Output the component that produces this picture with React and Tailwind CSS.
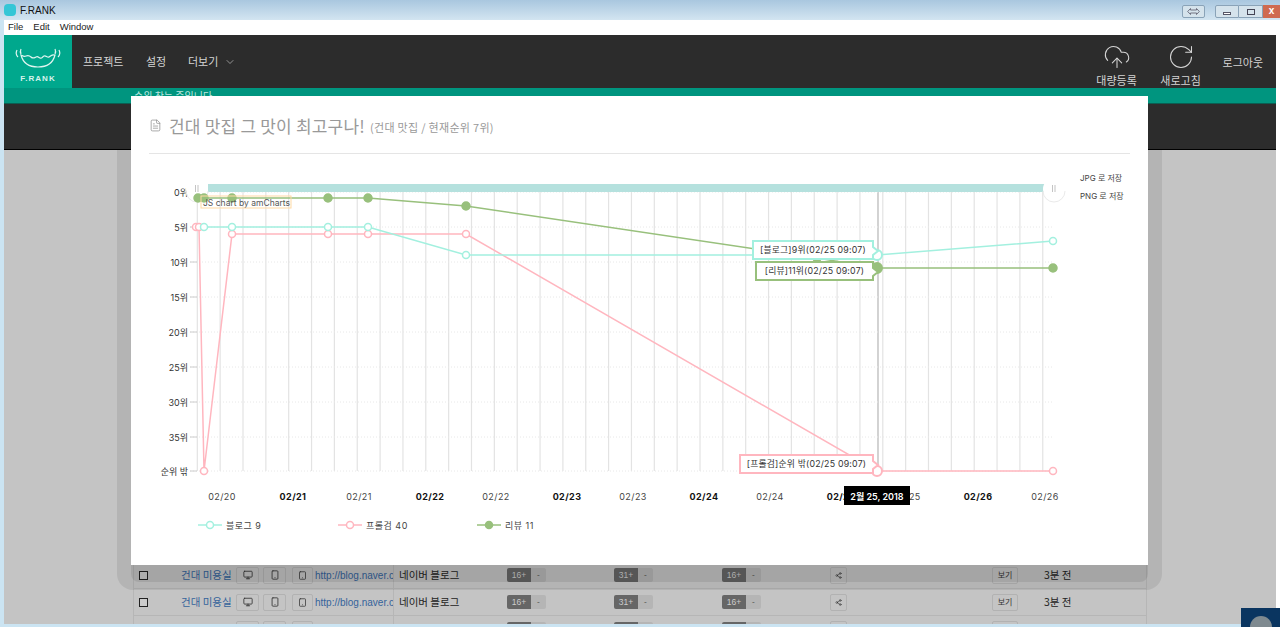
import { ChevronDown, CloudUpload, FileText, Monitor, RotateCw, Share2, Smartphone, Tablet } from "lucide-react";

const KR = "font-['Noto_Sans_CJK_KR','Noto_Sans',sans-serif]";
const CHART_FONT = "Inter, 'Noto Sans CJK KR', sans-serif";

// ===================== CHART DATA =====================
const CYAN = "#a3f0df";
const PINK = "#ffb6bf";
const GREEN = "#98c07c";

const gridX = Array.from({ length: 38 }, (_, i) => 197.3 + i * 22.85);
const yLabels = [
  ["0위", 192],
  ["5위", 227],
  ["10위", 262],
  ["15위", 297],
  ["20위", 332],
  ["25위", 367],
  ["30위", 402],
  ["35위", 437],
  ["순위 밖", 471],
];
const xLabels = [
  ["02/20", 222, false],
  ["02/21", 293, true],
  ["02/21", 359, false],
  ["02/22", 430, true],
  ["02/22", 496, false],
  ["02/23", 567, true],
  ["02/23", 633, false],
  ["02/24", 704, true],
  ["02/24", 770, false],
  ["02/25", 841, true],
  ["02/25", 907, false],
  ["02/26", 978, true],
  ["02/26", 1045, false],
];
const cyanPts = [[204, 227], [232, 227], [328, 227], [368, 227], [466, 255], [877, 255], [1053, 241]];
const pinkPts = [[196, 227], [199, 227], [204, 471], [232, 234], [328, 234], [368, 234], [466, 234], [877, 471], [1053, 471]];
const greenPts = [[198, 198], [204, 198], [232, 198], [328, 198], [368, 198], [466, 206], [817, 258], [877, 268], [1053, 268]];

const toLine = (pts) => pts.map((p) => p.join(",")).join(" ");

const Series = ({ pts, color, filled }) => (
  <g>
    <polyline points={toLine(pts)} fill="none" stroke={color} strokeWidth="1.5" />
    {pts.map(([x, y]) => {
      const big = x === 877;
      return (
        <circle
          key={x}
          cx={x}
          cy={y}
          r={big ? 5 : filled ? 4 : 3.5}
          fill={filled ? color : "#fff"}
          stroke={color}
          strokeWidth={big ? 2 : 1.5}
        />
      );
    })}
  </g>
);

const Balloon = ({ x, y, w, color, children }) => (
  <g>
    <path
      d={`M${x} ${y}h${w}v6l5 4l-5 4v4h-${w}z`}
      fill="#fff"
      stroke={color}
      strokeWidth="2"
    />
    <text x={x + w / 2} y={y + 12} textAnchor="middle" fontSize="8.8" letterSpacing=".2" fill="#333">
      {children}
    </text>
  </g>
);

const Legend = ({ x, color, filled, label }) => (
  <g>
    <line x1={x} x2={x + 24} y1="525" y2="525" stroke={color} strokeWidth="1.5" />
    <circle cx={x + 12} cy="525" r="3.5" fill={filled ? color : "#fff"} stroke={color} strokeWidth="1.5" />
    <text x={x + 28} y="529" fontSize="9" letterSpacing=".5" fill="#444">
      {label}
    </text>
  </g>
);

// drag handle of the chart scrollbar, only its lower rim shows
const Grip = ({ x }) => (
  <g>
    <circle cx={x} cy="189" r="11" fill="#fff" />
    <path d={`M${x - 11} 191a11 11 0 0 0 22 0`} fill="none" stroke="#eaeaea" />
    <line x1={x - 1.5} x2={x - 1.5} y1="185" y2="192" stroke="#aaa" strokeWidth=".7" />
    <line x1={x + 1} x2={x + 1} y1="185" y2="192" stroke="#aaa" strokeWidth=".7" />
  </g>
);

const Chart = () => (
  <svg viewBox="131 154 1017 411" className="block w-[1017px] h-[411px]" style={{ fontFamily: CHART_FONT }}>
    {gridX.map((x) => (
      <line key={x} x1={x} x2={x} y1="192" y2="471" stroke="#e3e3e3" strokeWidth="1.2" />
    ))}
    <line x1="878" x2="878" y1="192" y2="471" stroke="#b5b5b5" strokeWidth="1.2" />
    {yLabels.map(([label, y]) => (
      <g key={label}>
        <line x1="190" x2="1052" y1={y} y2={y} stroke="#e8e8e8" strokeDasharray="1 2" />
        <line x1="190" x2="197" y1={y} y2={y} stroke="#ccc" />
        <text x="188" y={y + 4} textAnchor="end" fontSize="9" fill="#333">
          {label}
        </text>
      </g>
    ))}
    {xLabels.map(([label, x, bold], i) => (
      <text
        key={i}
        x={x}
        y="500"
        textAnchor="middle"
        fontSize="9"
        letterSpacing=".4"
        fontWeight={bold ? 700 : 400}
        fill={bold ? "#111" : "#444"}
      >
        {label}
      </text>
    ))}

    {/* scrollbar */}
    <rect x="208" y="184" width="840" height="8" fill="#b5e1de" />
    <Grip x={197} />
    <Grip x={1054} />

    <Series pts={pinkPts} color={PINK} />
    <Series pts={cyanPts} color={CYAN} />
    <Series pts={greenPts} color={GREEN} filled />

    <rect x="201" y="196" width="90" height="12" fill="none" stroke="#ffd9a3" />
    <text x="203" y="205.5" fontSize="8.5" textLength="87" fill="#555">JS chart by amCharts</text>

    <text x="1080" y="181" fontSize="8" fill="#444">JPG 로 저장</text>
    <text x="1080" y="199" fontSize="8" fill="#444">PNG 로 저장</text>

    <Balloon x={753} y={241} w={120} color={CYAN}>[블로그]9위(02/25 09:07)</Balloon>
    <Balloon x={756} y={262} w={117} color={GREEN}>[리뷰]11위(02/25 09:07)</Balloon>
    <Balloon x={740} y={455} w={133} color={PINK}>[프롤검]순위 밖(02/25 09:07)</Balloon>

    <rect x="844" y="486" width="66" height="19" fill="#000" />
    <text x="877" y="500" textAnchor="middle" fontSize="9" fontWeight="600" fill="#fff">2월 25, 2018</text>

    <Legend x={198} color={CYAN} label="블로그 9" />
    <Legend x={338} color={PINK} label="프롤검 40" />
    <Legend x={477} color={GREEN} filled label="리뷰 11" />
  </svg>
);

// ===================== PAGE PARTS =====================
const TitleBar = () => (
  <div className="h-5 shrink-0 flex items-center justify-between pl-1 bg-gradient-to-b from-[#a9c7df] to-[#d3e5f1]">
    <div className="flex items-center gap-[4px]">
      <div className="w-[12px] h-[12px] rounded-[4px] bg-[#35c6d6]" />
      <span className="text-[10px] text-[#111] font-['Liberation_Sans',sans-serif]">F.RANK</span>
    </div>
    <div className="flex items-start self-start pt-[5px]">
      <div className="w-[23px] h-[13px] mr-[10px] border border-[#8aa3b8] rounded-[2px] bg-[#d5e3ec] flex items-center justify-center">
        <svg width="13" height="7" viewBox="0 0 13 7" fill="none" stroke="#667" strokeWidth=".9">
          <path d="M3.5.5L.7 3.5l2.8 3V5h6v1.5l2.8-3-2.8-3V2h-6z" />
        </svg>
      </div>
      <div className="w-6 h-[13px] border border-[#8aa3b8] rounded-l-[2px] bg-[#d5e3ec] flex items-end justify-center pb-[2px]">
        <div className="w-2 h-[3px] border border-[#556] bg-white" />
      </div>
      <div className="w-6 h-[13px] border border-l-0 border-[#8aa3b8] bg-[#d5e3ec] flex items-center justify-center">
        <div className="w-2 h-[6px] border border-[#445]" />
      </div>
      <div className="w-[17px] h-[13px] bg-[#cf6a50] text-white text-[10px] font-bold leading-[12px] text-center font-['Liberation_Sans',sans-serif]">x</div>
    </div>
  </div>
);

const MenuBar = () => (
  <div className="h-[15px] shrink-0 bg-white flex items-center gap-[10px] pl-[4px] text-[9.5px] text-[#222] font-['Liberation_Sans',sans-serif]">
    <span>File</span>
    <span>Edit</span>
    <span>Window</span>
  </div>
);

const Logo = () => (
  <div className="w-[68px] bg-[#00a88d] flex flex-col items-center pt-[11px]">
    <svg width="50" height="24" viewBox="0 0 50 24" fill="none" stroke="#dff5f0" strokeWidth="1.2">
      <path d="M8 9c2 8 8 12 17 12s15-4 17-12c-3-1-4 1-6 2-2 1-3-2-5-1s-2 3-4 2-2-2-4-1-3 2-5 0-3-2-5-1-3 0-5-1z" />
      <path d="M4 4c-1 2-1 5 1 7M8 3c-1 2-1 3 0 5M46 4c1 2 1 5-1 7M42 3c1 2 1 3 0 5" />
    </svg>
    <span className="text-[8px] mt-[3px] font-bold tracking-[1px] text-[#d5f2ec] font-['Liberation_Sans',sans-serif]">F.RANK</span>
  </div>
);

const Header = () => (
  <div className={`h-[53px] shrink-0 flex bg-[#2c2c2c] text-[#d5d5d5] text-[11px] ${KR}`}>
    <Logo />
    <div className="flex items-center pl-[11px]">
      <span className="w-[63px]">프로젝트</span>
      <span className="w-[42px]">설정</span>
      <span>더보기</span>
      <ChevronDown size={12} strokeWidth={1.2} className="ml-[6px]" />
    </div>
    <div className="ml-auto flex items-start pt-[8px] pr-[13px]">
      <div className="flex flex-col items-center w-[42px] mr-[22px]">
        <CloudUpload size={28} strokeWidth={0.9} />
        <span className="mt-[1px]">대량등록</span>
      </div>
      <div className="flex flex-col items-center w-[42px] mr-[21px]">
        <RotateCw size={28} strokeWidth={0.9} />
        <span className="mt-[1px]">새로고침</span>
      </div>
      <span className="mt-[11px]">로그아웃</span>
    </div>
  </div>
);

const IconBtn = ({ w, children }) => (
  <div className={`${w} h-[17px] shrink-0 border border-[#b2b2b2] rounded-[2px] flex items-center justify-center text-[#333]`}>
    {children}
  </div>
);

const Rank = ({ w, label }) => (
  <div className={`${w} flex`}>
    <div className="w-6 h-[14px] rounded-l-[2px] bg-[#666] text-[#ccc] text-[8.5px] leading-[14px] text-center font-['Liberation_Sans',sans-serif]">{label}</div>
    <div className="w-[15px] h-[14px] rounded-r-[2px] bg-[#b5b5b5] text-[#444] text-[8px] leading-[14px] text-center">-</div>
  </div>
);

const Row = () => (
  <div className={`h-[27px] shrink-0 flex items-center border-b border-[#b6b6b6] text-[10.5px] text-[#222] ${KR}`}>
    <div className="ml-[5px] w-[9px] h-[9px] border-[1.5px] border-[#222] bg-[#ccc] shrink-0" />
    <span className="ml-[33px] w-[55px] shrink-0 text-[#35639b] whitespace-nowrap">건대 미용실</span>
    <IconBtn w="w-[23px]"><Monitor size={10} /></IconBtn>
    <div className="w-1 shrink-0" />
    <IconBtn w="w-[23px]"><Smartphone size={10} /></IconBtn>
    <div className="w-[6px] shrink-0" />
    <IconBtn w="w-[21px]"><Tablet size={9} /></IconBtn>
    <span className="ml-[2px] w-[78px] shrink-0 overflow-hidden whitespace-nowrap text-[10px] text-[#35639b] font-['Liberation_Sans',sans-serif]">http://blog.naver.com</span>
    <span className="pl-[5px] w-[114px] shrink-0 h-full flex items-center border-l border-[#b6b6b6]">네이버 블로그</span>
    <Rank w="w-[107px] shrink-0" label="16+" />
    <Rank w="w-[108px] shrink-0" label="31+" />
    <Rank w="w-[108px] shrink-0" label="16+" />
    <IconBtn w="w-[17px]"><Share2 size={7} /></IconBtn>
    <div className="w-[145px] shrink-0" />
    <IconBtn w="w-[26px]"><span className="text-[8px]">보기</span></IconBtn>
    <span className="ml-[26px]">3분 전</span>
  </div>
);

const Modal = () => (
  <div className="absolute left-[131px] top-[96px] w-[1017px] h-[469px] bg-white">
    <div className={`mx-[18px] h-[58px] flex items-center gap-[7px] border-b border-[#e5e5e5] pt-[2px] ${KR}`}>
      <FileText size={13} strokeWidth={1.3} className="text-[#888]" />
      <span className="text-[17px] text-[#999] tracking-[.2px]">건대 맛집 그 맛이 최고구나!</span>
      <span className="text-[11px] text-[#999] mt-[3px] -ml-[2px] tracking-[.3px]">(건대 맛집 / 현재순위 7위)</span>
    </div>
    <Chart />
  </div>
);

const App = () => {
  return (
    <div className="relative w-[1280px] h-[627px] overflow-hidden flex flex-col">
      <TitleBar />
      <div className="flex-1 min-h-0 flex flex-col pl-1 border-r-4 border-white bg-[#cbe4f2]">
        <MenuBar />
        <Header />
        <div className={`h-[16px] shrink-0 bg-[#00957f] border-b border-[#0b5e52] pl-[130px] text-[10px] leading-[16px] text-[#bfe6df] ${KR}`}>
          순위 찾는 중입니다
        </div>
        <div className="h-[46px] shrink-0 bg-[#2c2c2c] border-b border-black" />
        <div className="relative flex-1 min-h-0 mb-[3px] overflow-hidden bg-[#c4c4c4] pl-[129px] pr-[129px]">
          <div className="h-full border-x border-[#b6b6b6] pt-[7px] flex flex-col">
            {Array.from({ length: 18 }, (_, i) => (
              <Row key={i} />
            ))}
          </div>
          {/* modal shadow bands, these sit over the table */}
          <div className="absolute left-[113px] top-0 w-[1045px] h-[440px] rounded-b-[16px] bg-black/8" />
          <div className="absolute left-[127px] top-[405px] w-[1017px] h-[27px] rounded-b-[8px] bg-black/8" />
        </div>
      </div>
      <Modal />
      <div className="absolute right-0 bottom-0 w-[39px] h-[19px] overflow-hidden bg-[#0a3560] flex justify-center pt-[8px]">
        <div className="w-[22px] h-[22px] rounded-full bg-[#7f8a90]" />
      </div>
    </div>
  );
};

export default App;
